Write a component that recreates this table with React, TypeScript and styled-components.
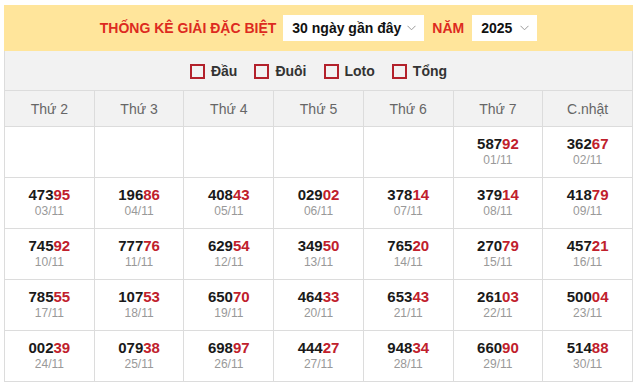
import React from "react";
import styled, { createGlobalStyle } from "styled-components";

const GlobalStyle = createGlobalStyle`
  html, body { margin: 0; padding: 0; background: #fff; }
  body { font-family: "Liberation Sans", Arial, sans-serif; }
`;

const Wrapper = styled.div`
  width: 629px;
  margin: 5px 0 0 4px;
`;

const TopBar = styled.div`
  height: 46px;
  background: #ffe59b;
  display: flex;
  align-items: center;
  justify-content: center;
  gap: 7px;
`;

const Title = styled.span`
  color: #dd2a1f;
  font-weight: bold;
  font-size: 14px;
  white-space: nowrap;
`;

const YearLabel = styled(Title)`
  margin: 0 1px;
`;

const SelectBox = styled.div<{ $w: number }>`
  width: ${(p) => p.$w}px;
  height: 26px;
  box-sizing: border-box;
  background: #fff;
  display: flex;
  align-items: center;
  justify-content: space-between;
  padding: 0 8px 0 9px;
  font-size: 14px;
  font-weight: bold;
  color: #111;
  white-space: nowrap;
`;

const Chevron = () => (
  <svg width="9" height="6" viewBox="0 0 9 6">
    <polyline points="0.5,0.8 4.5,4.8 8.5,0.8" fill="none" stroke="#9a9a9a" strokeWidth="1" />
  </svg>
);

const FilterBar = styled.div`
  height: 40px;
  background: #f2f2f2;
  border-left: 1px solid #dcdcdc;
  border-right: 1px solid #dcdcdc;
  border-bottom: 1px solid #dcdcdc;
  box-sizing: border-box;
  display: flex;
  align-items: center;
  justify-content: center;
  gap: 17px;
  padding-top: 1px;
`;

const CheckLabel = styled.label`
  display: flex;
  align-items: center;
  gap: 6px;
  font-size: 14px;
  font-weight: bold;
  color: #333;
`;

const Box = styled.span`
  width: 15px;
  height: 15px;
  box-sizing: border-box;
  border: 2px solid #b3212b;
`;

const Grid = styled.div`
  display: grid;
  grid-template-columns: repeat(7, 1fr);
  border-left: 1px solid #dcdcdc;
`;

const HeadCell = styled.div`
  height: 36px;
  box-sizing: border-box;
  background: #f2f2f2;
  border-right: 1px solid #dcdcdc;
  border-bottom: 1px solid #dcdcdc;
  display: flex;
  align-items: center;
  justify-content: center;
  font-size: 14px;
  color: #666;
`;

const Cell = styled.div`
  height: 51px;
  box-sizing: border-box;
  border-right: 1px solid #dcdcdc;
  border-bottom: 1px solid #dcdcdc;
  display: flex;
  flex-direction: column;
  align-items: center;
  justify-content: center;
  padding-bottom: 1px;
`;

const Num = styled.div`
  font-size: 15px;
  font-weight: bold;
  color: #1a1a1a;
  line-height: 16px;
`;

const Red = styled.span`
  color: #c0202c;
`;

const DateText = styled.div`
  font-size: 12px;
  color: #999;
  line-height: 14px;
  margin-top: 1px;
`;

const days = ["Thứ 2", "Thứ 3", "Thứ 4", "Thứ 5", "Thứ 6", "Thứ 7", "C.nhật"];

const data: ([string, string] | null)[] = [
  null, null, null, null, null, ["58792", "01/11"], ["36267", "02/11"],
  ["47395", "03/11"], ["19686", "04/11"], ["40843", "05/11"], ["02902", "06/11"], ["37814", "07/11"], ["37914", "08/11"], ["41879", "09/11"],
  ["74592", "10/11"], ["77776", "11/11"], ["62954", "12/11"], ["34950", "13/11"], ["76520", "14/11"], ["27079", "15/11"], ["45721", "16/11"],
  ["78555", "17/11"], ["10753", "18/11"], ["65070", "19/11"], ["46433", "20/11"], ["65343", "21/11"], ["26103", "22/11"], ["50004", "23/11"],
  ["00239", "24/11"], ["07938", "25/11"], ["69897", "26/11"], ["44427", "27/11"], ["94834", "28/11"], ["66090", "29/11"], ["51488", "30/11"],
];

export default function App() {
  return (
    <>
      <GlobalStyle />
      <Wrapper>
        <TopBar>
          <Title>THỐNG KÊ GIẢI ĐẶC BIỆT</Title>
          <SelectBox $w={141}>
            30 ngày gần đây <Chevron />
          </SelectBox>
          <YearLabel>NĂM</YearLabel>
          <SelectBox $w={65}>
            2025 <Chevron />
          </SelectBox>
        </TopBar>
        <FilterBar>
          {["Đầu", "Đuôi", "Loto", "Tổng"].map((t) => (
            <CheckLabel key={t}>
              <Box />
              {t}
            </CheckLabel>
          ))}
        </FilterBar>
        <Grid>
          {days.map((d) => (
            <HeadCell key={d}>{d}</HeadCell>
          ))}
          {data.map((c, i) => (
            <Cell key={i}>
              {c && (
                <>
                  <Num>
                    {c[0].slice(0, 3)}
                    <Red>{c[0].slice(3)}</Red>
                  </Num>
                  <DateText>{c[1]}</DateText>
                </>
              )}
            </Cell>
          ))}
        </Grid>
      </Wrapper>
    </>
  );
}
